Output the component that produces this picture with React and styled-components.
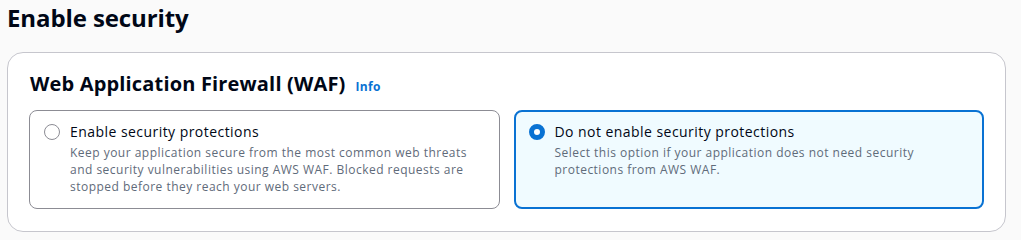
import styled, { createGlobalStyle } from "styled-components";

const GlobalStyle = createGlobalStyle`
  body {
    margin: 0;
    background: #fafafa;
    font-family: "Open Sans", "Noto Sans", sans-serif;
    color: #000716;
  }
`;

const Page = styled.div`
  padding: 2px 15px 0 7px;
`;

const PageTitle = styled.h1`
  margin: 0 0 18px;
  font-size: 24px;
  line-height: 32px;
  font-weight: 700;
  letter-spacing: -0.1px;
`;

const Container = styled.section`
  background: #fff;
  border: 1px solid #c6c6cd;
  border-radius: 16px;
  padding: 19px 21px 22px;
`;

const Header = styled.div`
  display: flex;
  align-items: baseline;
  gap: 10px;
  padding-left: 1px;
  margin-bottom: 14px;
`;

const Title = styled.h2`
  margin: 0;
  font-size: 20px;
  line-height: 24px;
  font-weight: 700;
  letter-spacing: 0.17px;
`;

const InfoLink = styled.a`
  font-size: 12px;
  font-weight: 700;
  color: #0972d3;
  text-decoration: none;
  letter-spacing: 0.3px;
`;

const Tiles = styled.div`
  display: grid;
  grid-template-columns: 1fr 1fr;
  gap: 14px;
`;

const Tile = styled.label`
  display: flex;
  gap: 10px;
  min-height: 99px;
  box-sizing: border-box;
  border-radius: 8px;
  cursor: pointer;
  border: ${(p) => (p.$selected ? "2px solid #0972d3" : "1px solid #8c8c94")};
  background: ${(p) => (p.$selected ? "#f0fbff" : "#fff")};
  padding: ${(p) => (p.$selected ? "10px 13px" : "11px 14px")};
`;

const Radio = styled.span`
  flex: none;
  width: 16px;
  height: 16px;
  margin-top: 2px;
  border-radius: 50%;
  box-sizing: border-box;
  border: ${(p) => (p.$checked ? "5px solid #0972d3" : "1px solid #8c8c94")};
  background: #fff;
`;

const Text = styled.div`
  display: flex;
  flex-direction: column;
`;

const Label = styled.span`
  font-size: 14px;
  line-height: 20px;
  color: #000716;
  letter-spacing: 0.45px;
`;

const Description = styled.span`
  margin-top: 2px;
  font-size: 12px;
  line-height: 17px;
  color: #5f6b7a;
  letter-spacing: 0.48px;
`;

const options = [
  {
    label: "Enable security protections",
    description:
      "Keep your application secure from the most common web threats and security vulnerabilities using AWS WAF. Blocked requests are stopped before they reach your web servers.",
  },
  {
    label: "Do not enable security protections",
    description:
      "Select this option if your application does not need security protections from AWS WAF.",
    selected: true,
  },
];

const App = () => {
  return (
    <>
      <GlobalStyle />
      <Page>
        <PageTitle>Enable security</PageTitle>
        <Container>
          <Header>
            <Title>Web Application Firewall (WAF)</Title>
            <InfoLink href="#">Info</InfoLink>
          </Header>
          <Tiles>
            {options.map((o) => (
              <Tile key={o.label} $selected={o.selected}>
                <Radio $checked={o.selected} />
                <Text>
                  <Label>{o.label}</Label>
                  <Description>{o.description}</Description>
                </Text>
              </Tile>
            ))}
          </Tiles>
        </Container>
      </Page>
    </>
  );
};

export default App;
